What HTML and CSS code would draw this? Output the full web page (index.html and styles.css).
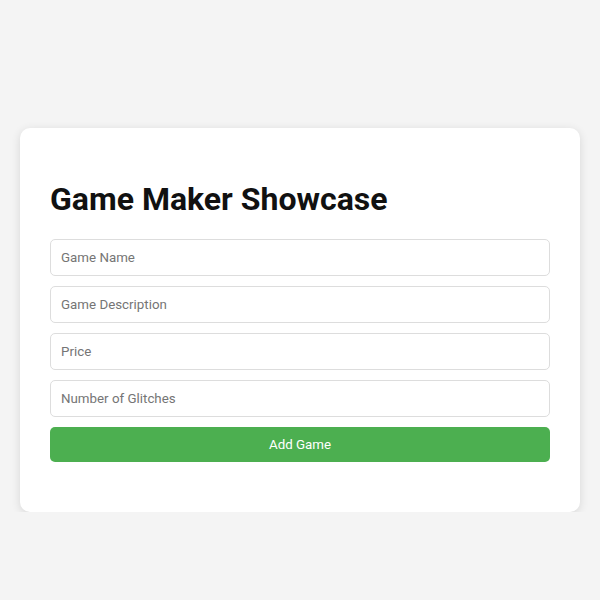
FILE: index.html
```html
<!DOCTYPE html>
<html>
<head>
<meta charset="utf-8">
<link rel="stylesheet" href="styles.css">
</head>
<body>
<div class="card">
  <h1 class="title">Game Maker Showcase</h1>
  <form class="form">
    <input class="field" type="text" placeholder="Game Name">
    <input class="field" type="text" placeholder="Game Description">
    <input class="field" type="text" placeholder="Price">
    <input class="field" type="text" placeholder="Number of Glitches">
    <button class="btn" type="button">Add Game</button>
  </form>
</div>
</body>
</html>
```
FILE: styles.css
```css
html, body {
  margin: 0;
  padding: 0;
}
body {
  background: #f4f4f4;
  font-family: Roboto, "Liberation Sans", sans-serif;
  padding: 128px 20px 0;
}
.card {
  background: #fff;
  border-radius: 10px;
  box-shadow: 0 2px 10px rgba(0, 0, 0, 0.12);
  padding: 30px 30px 50px;
}
.title {
  font-size: 32px;
  font-weight: 700;
  color: #111;
  margin: 23px 0 20px;
  line-height: 37.5px;
}
.form {
  display: flex;
  flex-direction: column;
  gap: 10px;
}
.field {
  box-sizing: border-box;
  height: 37px;
  width: 100%;
  padding: 0 10px;
  border: 1px solid #ddd;
  border-radius: 5px;
  font-family: Roboto, "Liberation Sans", sans-serif;
  font-size: 13.333px;
  color: #333;
  outline: none;
}
.field::placeholder {
  color: #757575;
}
.btn {
  height: 35px;
  border: none;
  border-radius: 5px;
  background: #4caf50;
  color: #fff;
  font-family: Roboto, "Liberation Sans", sans-serif;
  font-size: 13.333px;
}
```
